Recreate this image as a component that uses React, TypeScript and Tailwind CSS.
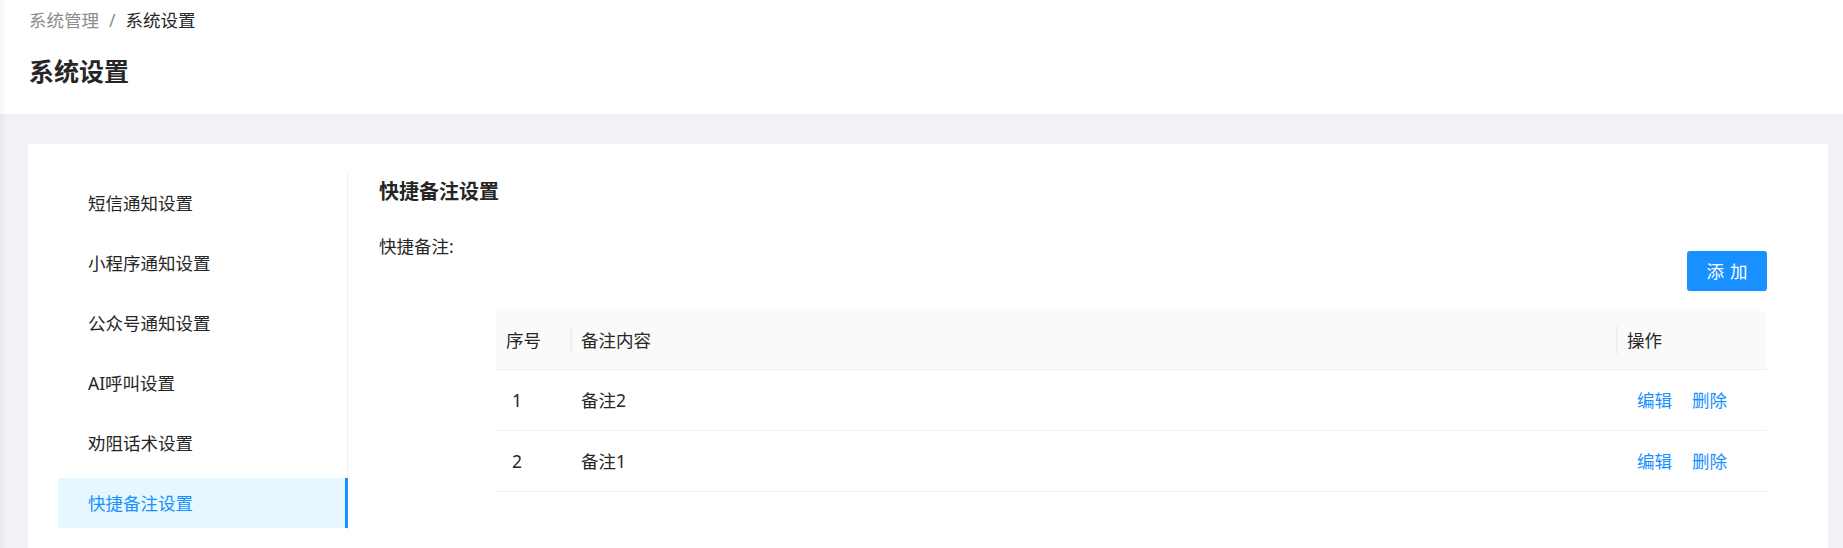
import { useState } from "react";

const menuItems = [
  "短信通知设置",
  "小程序通知设置",
  "公众号通知设置",
  "AI呼叫设置",
  "劝阻话术设置",
  "快捷备注设置",
];

const notes = [
  { id: 1, text: "备注2" },
  { id: 2, text: "备注1" },
];

export default function App() {
  const [active, setActive] = useState("快捷备注设置");

  return (
    <div className="min-h-screen bg-[#f0f2f5] font-['Noto_Sans','Noto_Sans_CJK_SC',sans-serif] text-[#262626]">
      {/* Page header */}
      <div className="h-[114px] bg-white pl-[29px] pt-[6px] shadow-[inset_8px_0_8px_-8px_rgba(0,0,0,0.08)]">
        <div className="flex items-center text-[17.5px] leading-[28px]">
          <span className="text-[#8c8c8c]">系统管理</span>
          <span className="mx-[10px] text-[#8c8c8c]">/</span>
          <span className="text-[#262626]">系统设置</span>
        </div>
        <h1 className="mt-[17px] text-[25px] font-bold leading-[40px] text-[#262626]">
          系统设置
        </h1>
      </div>

      {/* Body */}
      <div className="pt-[30px] pl-[28px] pr-[15px] shadow-[inset_8px_0_8px_-8px_rgba(0,0,0,0.08)]">
        <div className="flex rounded-[2px] bg-white pt-[29px] pl-[30px] pr-[61px] pb-[30px]">
          {/* Side menu */}
          <div className="flex w-[290px] shrink-0 flex-col gap-[10px] border-r border-[#f0f0f0] py-[5px]">
            {menuItems.map((label) => {
              const isActive = label === active;
              return (
                <div
                  key={label}
                  onClick={() => setActive(label)}
                  className={`-mr-px flex h-[50px] cursor-pointer items-center pl-[30px] text-[17.5px] ${
                    isActive
                      ? "border-r-[3px] border-[#1890ff] bg-[#e6f7ff] text-[#1890ff]"
                      : "text-[#262626]"
                  }`}
                >
                  {label}
                </div>
              );
            })}
          </div>

          {/* Content */}
          <div className="flex-1 pl-[31px] pt-[4px]">
            <h2 className="text-[20px] font-bold leading-[30px] text-[#262626]">
              快捷备注设置
            </h2>

            <div className="mt-[19px] flex">
              <div className="w-[117px] shrink-0 text-[17.5px] leading-[40px] text-[#262626]">
                快捷备注:
              </div>

              <div className="flex flex-1 flex-col pt-[25px]">
                <button className="h-[40px] w-[80px] self-end rounded-[3px] bg-[#1890ff] text-[17.5px] text-white shadow-[0_2px_0_rgba(0,0,0,0.045)]">
                  <span className="mr-[-0.34em] tracking-[0.34em]">添加</span>
                </button>

                {/* Table */}
                <div className="mt-[20px] text-[17.5px]">
                  <div className="flex h-[59px] items-center border-b border-[#f0f0f0] bg-[#fafafa]">
                    <div className="w-[74px] shrink-0 pl-[10px]">序号</div>
                    <div className="flex flex-1 items-center">
                      <span className="h-[28px] w-[2px] bg-[#f0f0f0]" />
                      <span className="pl-[9px]">备注内容</span>
                    </div>
                    <div className="flex w-[151px] shrink-0 items-center">
                      <span className="h-[28px] w-[2px] bg-[#f0f0f0]" />
                      <span className="pl-[9px]">操作</span>
                    </div>
                  </div>

                  {notes.map((n) => (
                    <div
                      key={n.id}
                      className="flex h-[61px] items-center border-b border-[#f0f0f0]"
                    >
                      <div className="w-[74px] shrink-0 pl-[16px]">{n.id}</div>
                      <div className="flex-1 pl-[11px]">{n.text}</div>
                      <div className="flex w-[151px] shrink-0 gap-[20px] pl-[21px] text-[#1890ff]">
                        <span className="cursor-pointer">编辑</span>
                        <span className="cursor-pointer">删除</span>
                      </div>
                    </div>
                  ))}
                </div>
              </div>
            </div>
          </div>
        </div>
      </div>
    </div>
  );
}
